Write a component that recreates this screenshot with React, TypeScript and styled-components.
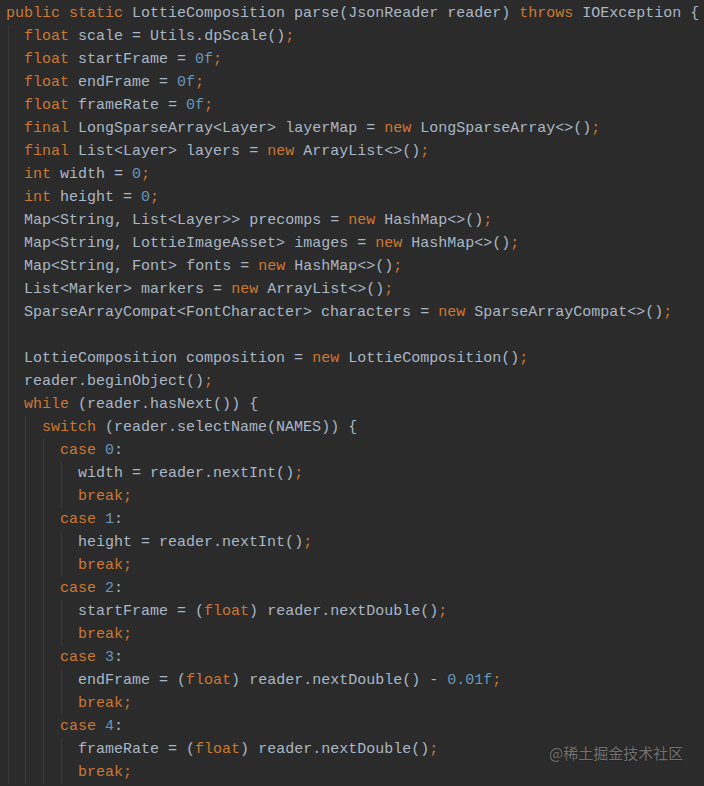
import React from "react";
import styled, { createGlobalStyle } from "styled-components";

const Global = createGlobalStyle`
  html, body {
    margin: 0;
    padding: 0;
    background: #2b2b2b;
  }
`;

const Editor = styled.div`
  position: relative;
  width: 704px;
  height: 786px;
  overflow: hidden;
  background: #2b2b2b;
  box-sizing: border-box;
  padding: 2px 0 0 6px;
  font-family: "Liberation Mono", "DejaVu Sans Mono", monospace;
  font-size: 15px;
  line-height: 23px;
  color: #a9b7c6;
`;

const Line = styled.div`
  height: 23px;
  white-space: pre;
`;

const Block = styled.div<{ $offset: number }>`
  margin-left: ${(p) => p.$offset}px;
  padding-left: ${(p) => 17 - p.$offset}px;
  border-left: 1px solid #393939;
`;

const Keyword = styled.span`
  color: #cc7832;
`;

const Num = styled.span`
  color: #6897bb;
`;

const Watermark = styled.div`
  position: absolute;
  left: 549px;
  top: 742px;
  font-family: "Noto Sans CJK SC", "Noto Sans", sans-serif;
  font-size: 15px;
  line-height: 22px;
  color: #717171;
  text-shadow: 0 0 2px rgba(0, 0, 0, 0.35);
  white-space: nowrap;
`;

const KEYWORDS = new Set([
  "public",
  "static",
  "throws",
  "float",
  "final",
  "new",
  "int",
  "while",
  "switch",
  "case",
  "break",
]);

function Code({ text }: { text: string }) {
  const parts = text.match(/[A-Za-z_][A-Za-z0-9_]*|\d+(?:\.\d+)?f?|;|\s+|./g) || [];
  return (
    <Line>
      {parts.map((p, i) => {
        if (KEYWORDS.has(p) || p === ";") return <Keyword key={i}>{p}</Keyword>;
        if (/^\d/.test(p)) return <Num key={i}>{p}</Num>;
        return <React.Fragment key={i}>{p}</React.Fragment>;
      })}
      {text === "" ? " " : null}
    </Line>
  );
}

const header = [
  "float scale = Utils.dpScale();",
  "float startFrame = 0f;",
  "float endFrame = 0f;",
  "float frameRate = 0f;",
  "final LongSparseArray<Layer> layerMap = new LongSparseArray<>();",
  "final List<Layer> layers = new ArrayList<>();",
  "int width = 0;",
  "int height = 0;",
  "Map<String, List<Layer>> precomps = new HashMap<>();",
  "Map<String, LottieImageAsset> images = new HashMap<>();",
  "Map<String, Font> fonts = new HashMap<>();",
  "List<Marker> markers = new ArrayList<>();",
  "SparseArrayCompat<FontCharacter> characters = new SparseArrayCompat<>();",
  "",
  "LottieComposition composition = new LottieComposition();",
  "reader.beginObject();",
];

const cases: { label: string; body: string[] }[] = [
  { label: "case 0:", body: ["width = reader.nextInt();", "break;"] },
  { label: "case 1:", body: ["height = reader.nextInt();", "break;"] },
  { label: "case 2:", body: ["startFrame = (float) reader.nextDouble();", "break;"] },
  { label: "case 3:", body: ["endFrame = (float) reader.nextDouble() - 0.01f;", "break;"] },
  { label: "case 4:", body: ["frameRate = (float) reader.nextDouble();", "break;"] },
];

export default function App() {
  return (
    <>
      <Global />
      <Editor>
        <Code text="public static LottieComposition parse(JsonReader reader) throws IOException {" />
        <Block $offset={2}>
          {header.map((l, i) => (
            <Code key={i} text={l} />
          ))}
          <Code text="while (reader.hasNext()) {" />
          <Block $offset={1}>
            <Code text="switch (reader.selectName(NAMES)) {" />
            <Block $offset={1}>
              {cases.map((c, i) => (
                <React.Fragment key={i}>
                  <Code text={c.label} />
                  <Block $offset={1}>
                    {c.body.map((b, j) => (
                      <Code key={j} text={b} />
                    ))}
                  </Block>
                </React.Fragment>
              ))}
            </Block>
          </Block>
        </Block>
        <Watermark>@稀土掘金技术社区</Watermark>
      </Editor>
    </>
  );
}
